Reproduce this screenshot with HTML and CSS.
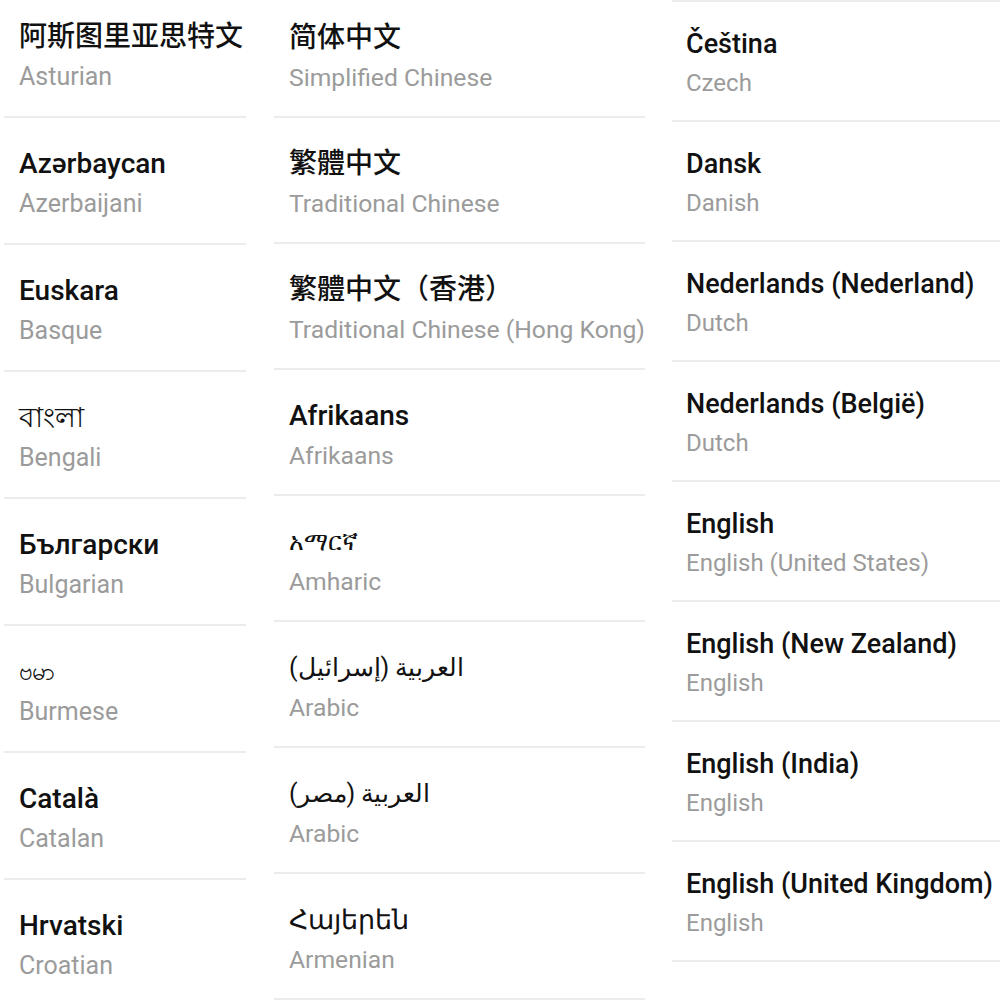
FILE: index.html
```html
<!DOCTYPE html>
<html lang="en">
<head>
<meta charset="utf-8">
<title>Languages</title>
<link rel="stylesheet" href="styles.css">
</head>
<body>
<main class="board">
  <section class="lang-list lang-list--a">
    <div class="lang"><div class="lang-name cjk-sc">阿斯图里亚思特文</div><div class="lang-sub">Asturian</div></div>
    <div class="lang"><div class="lang-name">Azərbaycan</div><div class="lang-sub">Azerbaijani</div></div>
    <div class="lang"><div class="lang-name">Euskara</div><div class="lang-sub">Basque</div></div>
    <div class="lang"><div class="lang-name script">বাংলা</div><div class="lang-sub">Bengali</div></div>
    <div class="lang"><div class="lang-name">Български</div><div class="lang-sub">Bulgarian</div></div>
    <div class="lang"><div class="lang-name script burmese">ဗမာ</div><div class="lang-sub">Burmese</div></div>
    <div class="lang"><div class="lang-name">Català</div><div class="lang-sub">Catalan</div></div>
    <div class="lang"><div class="lang-name">Hrvatski</div><div class="lang-sub">Croatian</div></div>
  </section>

  <section class="lang-list lang-list--b">
    <div class="lang"><div class="lang-name cjk-sc">简体中文</div><div class="lang-sub">Simplified Chinese</div></div>
    <div class="lang"><div class="lang-name cjk-tc">繁體中文</div><div class="lang-sub">Traditional Chinese</div></div>
    <div class="lang"><div class="lang-name cjk-tc">繁體中文（香港）</div><div class="lang-sub">Traditional Chinese (Hong Kong)</div></div>
    <div class="lang"><div class="lang-name">Afrikaans</div><div class="lang-sub">Afrikaans</div></div>
    <div class="lang"><div class="lang-name script ethiopic">አማርኛ</div><div class="lang-sub">Amharic</div></div>
    <div class="lang"><div class="lang-name script arabic"><span dir="rtl">العربية (إسرائيل)</span></div><div class="lang-sub">Arabic</div></div>
    <div class="lang"><div class="lang-name script arabic"><span dir="rtl">العربية (مصر)</span></div><div class="lang-sub">Arabic</div></div>
    <div class="lang"><div class="lang-name script armenian">Հայերեն</div><div class="lang-sub">Armenian</div></div>
  </section>

  <section class="lang-list lang-list--c">
    <div class="lang"><div class="lang-name">Čeština</div><div class="lang-sub">Czech</div></div>
    <div class="lang"><div class="lang-name">Dansk</div><div class="lang-sub">Danish</div></div>
    <div class="lang"><div class="lang-name">Nederlands (Nederland)</div><div class="lang-sub">Dutch</div></div>
    <div class="lang"><div class="lang-name">Nederlands (België)</div><div class="lang-sub">Dutch</div></div>
    <div class="lang"><div class="lang-name">English</div><div class="lang-sub">English (United States)</div></div>
    <div class="lang"><div class="lang-name">English (New Zealand)</div><div class="lang-sub">English</div></div>
    <div class="lang"><div class="lang-name">English (India)</div><div class="lang-sub">English</div></div>
    <div class="lang"><div class="lang-name">English (United Kingdom)</div><div class="lang-sub">English</div></div>
  </section>
</main>
</body>
</html>
```

FILE: styles.css
```css
html, body {
  margin: 0;
  padding: 0;
  background: #ffffff;
}

body {
  font-family: Roboto, "Noto Sans", "Noto Sans CJK SC", sans-serif;
  color: #111111;
  overflow: hidden;
  height: 1000px;
}

.board {
  display: flex;
  align-items: flex-start;
  height: 1000px;
  overflow: hidden;
}

.lang-list {
  display: flex;
  flex-direction: column;
  flex: none;
}

.lang {
  display: flex;
  flex-direction: column;
  border-bottom: 2px solid #ececec;
  white-space: nowrap;
}

.lang-name {
  font-size: 28px;
  font-weight: 500;
  line-height: 36px;
  color: #111111;
}

.lang-sub {
  font-size: 25px;
  font-weight: 400;
  line-height: 36px;
  margin-top: 4px;
  color: #9b9b9b;
}

.cjk-sc {
  font-family: Roboto, "Noto Sans CJK SC", sans-serif;
}

.cjk-tc {
  font-family: Roboto, "Noto Sans CJK TC", sans-serif;
}

.script {
  font-weight: 400;
}

.burmese {
  font-size: 24px;
}

.ethiopic,
.arabic {
  font-size: 25px;
}

.armenian {
  font-size: 26.5px;
}

/* first list: tallest rows */
.lang-list--a {
  width: 242px;
  margin-left: 4px;
  margin-top: -9px;
}

.lang-list--a .lang {
  padding: 28px 0 21px 15px;
}

/* second list */
.lang-list--b {
  width: 371px;
  margin-left: 28px;
  margin-top: -8px;
}

.lang-list--b .lang {
  padding: 28px 0 20px 15px;
}

.lang-list--b .lang-sub {
  font-size: 24.7px;
}

/* third list: compact rows, starts under a divider */
.lang-list--c {
  width: 328px;
  margin-left: 27px;
  border-top: 2px solid #ececec;
}

.lang-list--c .lang {
  padding: 25px 0 20px 14px;
}

.lang-list--c .lang-name {
  font-size: 27px;
  line-height: 34px;
}

.lang-list--c .lang-sub {
  font-size: 24px;
  line-height: 34px;
  margin-top: 5px;
}
```
